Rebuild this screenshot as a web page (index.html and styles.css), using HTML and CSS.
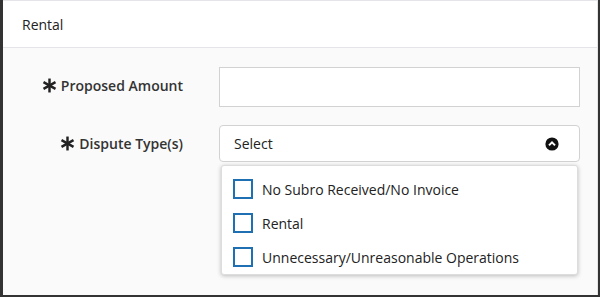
FILE: index.html
```html
<html>
<head>
  <title>Dispute</title>
  <link rel="stylesheet" href="styles.css">
</head>
<body>
  <div class="frame">
    <div class="panel">
      <div class="panelHead">Rental</div>
      <div class="panelBody">
        <div class="formRow">
          <label class="fieldLabel lift">
            <svg class="req" width="15" height="15" viewBox="0 0 14 14"><g stroke="#222" stroke-width="2.3" stroke-linecap="butt"><line x1="7" y1="0.5" x2="7" y2="13.5"/><line x1="1.4" y1="3.8" x2="12.6" y2="10.2"/><line x1="1.4" y1="10.2" x2="12.6" y2="3.8"/></g></svg>
            Proposed Amount
          </label>
          <div class="textBox"></div>
        </div>
        <div class="formRow">
          <label class="fieldLabel">
            <svg class="req" width="15" height="15" viewBox="0 0 14 14"><g stroke="#222" stroke-width="2.3" stroke-linecap="butt"><line x1="7" y1="0.5" x2="7" y2="13.5"/><line x1="1.4" y1="3.8" x2="12.6" y2="10.2"/><line x1="1.4" y1="10.2" x2="12.6" y2="3.8"/></g></svg>
            Dispute Type(s)
          </label>
          <div class="selectWrap">
            <div class="selectBox">
              <span>Select</span>
              <svg width="14" height="14" viewBox="0 0 14 14"><circle cx="7" cy="7" r="6.6" fill="#111"/><path d="M4 8.4 L7 5.4 L10 8.4" fill="none" stroke="#fff" stroke-width="2"/></svg>
            </div>
            <ul class="options">
              <li><span class="chk"></span>No Subro Received/No Invoice</li>
              <li><span class="chk"></span>Rental</li>
              <li><span class="chk"></span>Unnecessary/Unreasonable Operations</li>
            </ul>
          </div>
        </div>
      </div>
    </div>
  </div>
</body>
</html>
```
FILE: styles.css
```css
body { margin: 0; font-family: "Open Sans", "Liberation Sans", sans-serif; color: #222; background: #fff; }
.frame { width: 600px; height: 297px; box-sizing: border-box; border-left: 3px solid #333; border-right: 2px solid #333; border-bottom: 2px solid #333; }
.panel { height: 295px; box-sizing: border-box; border-top: 1px solid #e3e5e8; border-right: 1px solid #e6e6e6; background: #fafafa; }
.panelHead { height: 47px; box-sizing: border-box; padding: 14px 0 0 19px; font-size: 14px; background: #fff; border-bottom: 1px solid #e3e5e8; }
.panelBody { padding-top: 19px; display: flex; flex-direction: column; gap: 18px; }
.formRow { display: grid; grid-template-columns: 180px 361px; column-gap: 36px; align-items: center; }
.fieldLabel { display: flex; justify-content: flex-end; align-items: center; gap: 4px; font-size: 14px; font-weight: 600; color: #333; }
.lift { padding-bottom: 3px; }
.req { flex: none; }
.textBox { height: 40px; box-sizing: border-box; background: #fff; border: 1px solid #d2d2d2; }
.selectWrap { position: relative; }
.selectBox { height: 37px; box-sizing: border-box; display: flex; justify-content: space-between; align-items: center; padding: 0 20px 0 14px; background: #fff; border: 1px solid #d2d2d2; border-radius: 4px; font-size: 14px; }
.options { position: absolute; left: 2px; right: 2px; top: 40px; height: 110px; box-sizing: border-box; margin: 0; padding: 6px 0 0 11px; list-style: none; background: #fff; border: 1px solid #ddd; border-radius: 3px; box-shadow: 0 1px 4px rgba(0,0,0,0.25); }
.options li { height: 34px; display: flex; align-items: center; gap: 9px; font-size: 14px; color: #222; }
.chk { width: 20px; height: 20px; box-sizing: border-box; border: 2px solid #1f6fb3; }
```
